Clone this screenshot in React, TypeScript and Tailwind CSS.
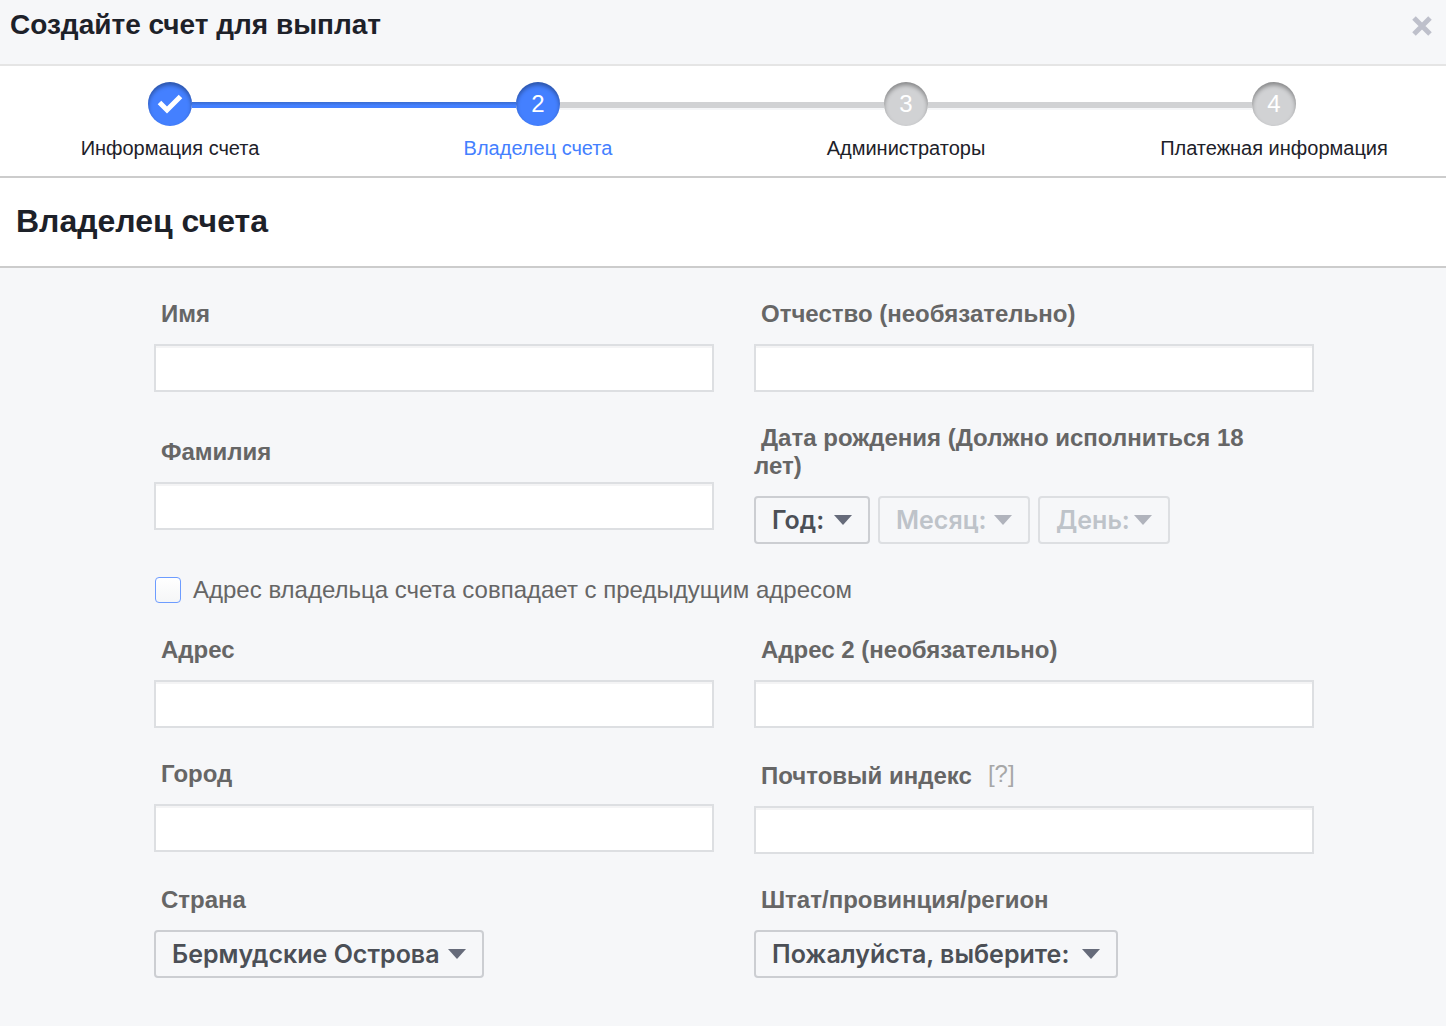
import type { ReactNode } from "react";

interface StepProps {
  number: number;
  label: string;
  status: "done" | "current" | "upcoming";
  first?: boolean;
  last?: boolean;
}

interface FieldProps {
  id: string;
  label: string;
  children: ReactNode;
}

interface SelectProps {
  id: string;
  value: string;
  width: string;
  label?: string;
  disabled?: boolean;
}

const steps: StepProps[] = [
  { number: 1, label: "Информация счета", status: "done", first: true },
  { number: 2, label: "Владелец счета", status: "current" },
  { number: 3, label: "Администраторы", status: "upcoming" },
  { number: 4, label: "Платежная информация", status: "upcoming", last: true },
];

const activeLine = "bg-linear-to-b from-[#3a6cd0] to-[#4480ff] to-60%";
const idleLine = "bg-[#d1d2d4] shadow-[0_2px_0_#f5f6f8]";

function Line({ active, hidden }: { active: boolean; hidden?: boolean }) {
  return (
    <div
      className={`mt-0.5 h-1.5 flex-1 ${hidden ? "invisible" : ""} ${
        active ? activeLine : idleLine
      }`}
    />
  );
}

function Step({ number, label, status, first, last }: StepProps) {
  const reached = status !== "upcoming";

  return (
    <li aria-current={status === "current" ? "step" : undefined}>
      <div className="flex items-center">
        <Line active={reached} hidden={first} />
        <span
          className={`flex size-11 items-center justify-center rounded-full text-2xl text-white shadow-[inset_0_3px_4px_rgba(0,0,0,0.35)] ${
            reached ? "bg-[#4480ff]" : "bg-[#d1d2d4]"
          }`}
        >
          {status === "done" ? (
            <svg
              viewBox="0 0 44 44"
              className="size-11"
              fill="none"
              stroke="currentColor"
              strokeWidth="5"
              aria-hidden="true"
            >
              <path d="M11.5 20.5 19 28 32.5 14.5" />
            </svg>
          ) : (
            number
          )}
        </span>
        <Line active={status === "done"} hidden={last} />
      </div>
      <p
        className={`mt-2 text-center text-xl leading-7 ${
          status === "current" ? "text-[#4480ff]" : "text-[#1d2129]"
        }`}
      >
        {label}
      </p>
    </li>
  );
}

function Field({ id, label, children }: FieldProps) {
  return (
    <div>
      <label
        htmlFor={id}
        className="mb-4 block pr-5 indent-[7px] text-2xl leading-7 font-bold text-[#666]"
      >
        {label}
      </label>
      {children}
    </div>
  );
}

function TextInput({ id }: { id: string }) {
  return (
    <input
      id={id}
      type="text"
      className="block h-12 w-full border-2 border-[#dddfe2] bg-white px-3 text-2xl shadow-[inset_0_2px_0_#f4f4f5] outline-none focus:border-[#4480ff]"
    />
  );
}

function Select({ id, value, width, label, disabled }: SelectProps) {
  return (
    <span className="relative inline-block align-top">
      <select
        id={id}
        aria-label={label}
        disabled={disabled}
        className={`${width} block h-12 appearance-none rounded border-2 border-[#ccced2] bg-transparent pr-9 pl-4 font-[Inter,sans-serif] text-[25px] leading-7 font-semibold text-[#4b4f56] disabled:border-[#dddfe2] disabled:text-[#bec3c9] disabled:opacity-100`}
      >
        <option>{value}</option>
      </select>
      <svg
        viewBox="0 0 18 11"
        className={`pointer-events-none absolute top-[19px] right-[18px] h-[11px] w-[18px] ${
          disabled ? "text-[#b0b3bc]" : "text-[#666b7a]"
        }`}
        fill="currentColor"
        aria-hidden="true"
      >
        <path d="M0 0h18L9 10z" />
      </svg>
    </span>
  );
}

export default function App() {
  return (
    <div className="min-h-screen overflow-x-hidden bg-[#f6f7f9] font-['Liberation_Sans',Arial,sans-serif] text-[#1d2129]">
      <header className="flex h-[66px] items-start justify-between border-b-2 border-[#e5e5e5] pt-2 pr-3.5 pl-2.5">
        <h1 className="text-[28px] leading-[34px] font-bold">
          Создайте счет для выплат
        </h1>
        <button type="button" aria-label="Закрыть" className="mt-2 text-[#bec0cb]">
          <svg
            viewBox="0 0 20 20"
            className="size-5"
            fill="none"
            stroke="currentColor"
            strokeWidth="5"
            aria-hidden="true"
          >
            <path d="M2 2l16 16M18 2 2 18" />
          </svg>
        </button>
      </header>

      <nav className="border-b-2 border-[#ccc] bg-white pt-4 pb-3.5">
        <ol className="-mr-3 -ml-3.5 grid grid-cols-4">
          {steps.map((step) => (
            <Step key={step.number} {...step} />
          ))}
        </ol>
      </nav>

      <h2 className="border-b-2 border-[#ccc] bg-white px-4 pt-[23px] pb-[25px] text-[32px] leading-10 font-bold">
        Владелец счета
      </h2>

      <form className="flex flex-col gap-8 pt-8 pr-[132px] pb-12 pl-[154px]">
        <div className="grid grid-cols-2 gap-10">
          <Field id="first-name" label="Имя">
            <TextInput id="first-name" />
          </Field>
          <Field id="middle-name" label="Отчество (необязательно)">
            <TextInput id="middle-name" />
          </Field>
        </div>

        <div className="grid grid-cols-2 items-center gap-10">
          <Field id="last-name" label="Фамилия">
            <TextInput id="last-name" />
          </Field>
          <Field id="birth-year" label="Дата рождения (Должно исполниться 18 лет)">
            <div className="flex gap-2">
              <Select id="birth-year" value="Год:" width="w-[116px]" />
              <Select
                id="birth-month"
                label="Месяц"
                value="Месяц:"
                width="w-[152px]"
                disabled
              />
              <Select
                id="birth-day"
                label="День"
                value="День:"
                width="w-[132px]"
                disabled
              />
            </div>
          </Field>
        </div>

        <div className="flex items-center gap-3">
          <input
            id="same-address"
            type="checkbox"
            className="ml-px size-[26px] appearance-none rounded border border-[#6d9cff] bg-linear-to-b from-white to-[#f5f6f7] checked:bg-[#4480ff] checked:bg-none"
          />
          <label htmlFor="same-address" className="text-2xl leading-7 text-[#666]">
            Адрес владельца счета совпадает с предыдущим адресом
          </label>
        </div>

        <div className="grid grid-cols-2 gap-10">
          <Field id="address" label="Адрес">
            <TextInput id="address" />
          </Field>
          <Field id="address-2" label="Адрес 2 (необязательно)">
            <TextInput id="address-2" />
          </Field>
        </div>

        <div className="grid grid-cols-2 gap-10">
          <Field id="city" label="Город">
            <TextInput id="city" />
          </Field>
          <div>
            <div className="mb-4 flex items-start gap-4 pl-[7px]">
              <label
                htmlFor="postcode"
                className="pt-0.5 text-2xl leading-7 font-bold text-[#666]"
              >
                Почтовый индекс
              </label>
              <button
                type="button"
                aria-label="Справка о почтовом индексе"
                className="text-2xl leading-7 text-[#a7a7a7]"
              >
                [?]
              </button>
            </div>
            <TextInput id="postcode" />
          </div>
        </div>

        <div className="grid grid-cols-2 gap-10">
          <Field id="country" label="Страна">
            <Select id="country" value="Бермудские Острова" width="w-[330px]" />
          </Field>
          <Field id="region" label="Штат/провинция/регион">
            <Select id="region" value="Пожалуйста, выберите:" width="w-[364px]" />
          </Field>
        </div>
      </form>
    </div>
  );
}
